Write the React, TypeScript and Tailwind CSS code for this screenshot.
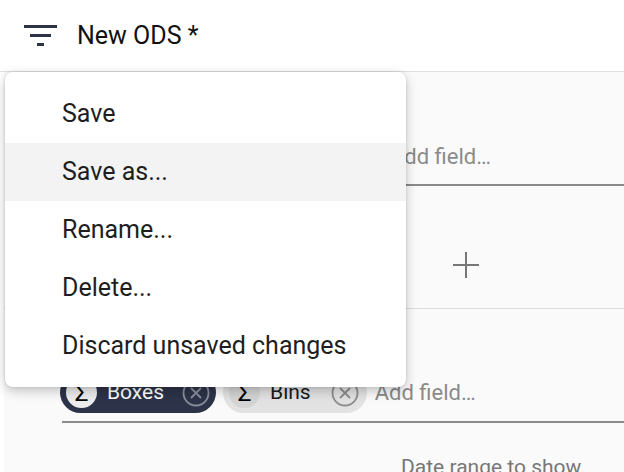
import { useState } from 'react';

function FilterIcon() {
  return (
    <svg width="34" height="24" viewBox="0 0 34 24" className="text-[#2d3446]">
      <rect x="0" y="1" width="33" height="3" fill="currentColor" />
      <rect x="6" y="10" width="21" height="3" fill="currentColor" />
      <rect x="13" y="19" width="7" height="3" fill="currentColor" />
    </svg>
  );
}

function CloseCircle({ color }: { color: string }) {
  return (
    <svg width="28" height="28" viewBox="0 0 28 28" fill="none" stroke={color} strokeWidth="1.8">
      <circle cx="14" cy="14" r="12.5" />
      <path d="M9 9 L19 19 M19 9 L9 19" />
    </svg>
  );
}

function Chip({ label, dark }: { label: string; dark?: boolean }) {
  return (
    <div
      className={`flex items-center h-[41px] rounded-full pl-[6px] ${
        dark ? 'bg-[#2d3348] text-white pr-[6px]' : 'bg-[#e2e2e2] text-[#1a1a1a] pr-[8px]'
      }`}
    >
      <div
        className={`w-[31px] h-[31px] rounded-full flex items-center justify-center text-[24px] leading-none text-black ${
          dark ? 'bg-[#ececec]' : 'bg-[#d4d4d4]'
        }`}
      >
        Σ
      </div>
      <span className={`ml-[10px] text-[21px] leading-none ${dark ? 'mr-[18px]' : 'mr-[20px]'}`}>{label}</span>
      <CloseCircle color={dark ? '#8a8f9c' : '#8c8c8c'} />
    </div>
  );
}

export default function App() {
  const [hovered, setHovered] = useState(1);
  const items = ['Save', 'Save as...', 'Rename...', 'Delete...', 'Discard unsaved changes'];

  return (
    <div className="relative w-[624px] h-[472px] overflow-hidden bg-white font-['Roboto',sans-serif]">
      <header className="h-[72px] flex items-center pl-[24px] border-b border-[#e0e0e0]">
        <FilterIcon />
        <h1 className="ml-[19px] text-[25px] text-[#111] leading-none">New ODS *</h1>
      </header>

      <div className="ml-[4px] bg-[#fafafa] flex flex-col pb-[20px]">
        <div className="pl-[58px] pt-[64px]">
          <div className="h-[50px] flex items-center pb-[6px] pl-[328px] border-b-2 border-[#8a8a8a]">
            <span className="text-[22px] leading-none text-[#8a8a8a]">Add field…</span>
          </div>
        </div>

        <div className="h-[123px] flex items-start justify-end pt-[66px] pr-[145px] border-b border-[#dcdcdc]">
          <svg width="26" height="26" viewBox="0 0 26 26" stroke="#777" strokeWidth="2">
            <path d="M13 0 V26 M0 13 H26" />
          </svg>
        </div>

        <div className="pl-[58px] pt-[63px]">
          <div className="flex items-center pb-[8px] border-b-2 border-[#8a8a8a]">
            <div className="-ml-[2px] flex items-center gap-[7px]">
              <Chip label="Boxes" dark />
              <Chip label="Bins" />
            </div>
            <span className="ml-[8px] text-[22px] leading-none text-[#8a8a8a]">Add field…</span>
          </div>
        </div>

        <div className="pl-[397px] pt-[34px] text-[21px] text-[#777] leading-none">Date range to show</div>
      </div>

      <div className="absolute left-[5px] top-[72px] w-[401px] h-[315px] bg-white rounded-[8px] shadow-[0_4px_12px_rgba(0,0,0,0.22),0_0_3px_rgba(0,0,0,0.12)] pt-[13px]">
        {items.map((item, i) => (
          <div
            key={item}
            onMouseEnter={() => setHovered(i)}
            className={`h-[58px] flex items-center pl-[57px] text-[25px] text-[#1e1e1e] ${
              hovered === i ? 'bg-[#f3f3f3]' : ''
            }`}
          >
            {item}
          </div>
        ))}
      </div>
    </div>
  );
}
